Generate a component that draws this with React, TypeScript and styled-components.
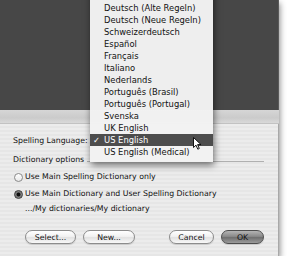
import React from "react";
import styled, { createGlobalStyle } from "styled-components";

const GlobalStyle = createGlobalStyle`
  html, body {
    margin: 0;
    padding: 0;
    background: #ffffff;
    font-family: "DejaVu Sans", "Liberation Sans", sans-serif;
  }
`;

const Window = styled.div`
  position: relative;
  width: 279px;
  height: 256px;
  display: flex;
  flex-direction: column;
  box-shadow: 1px 3px 6px rgba(0, 0, 0, 0.45);
  overflow: hidden;
`;

const Backdrop = styled.div`
  height: 110px;
  background: #474747;
  border-right: 1px solid #5a5a5a;
`;

const SheetTop = styled.div`
  height: 13px;
  background: linear-gradient(#d6d6d6, #cbcbcb 60%, #d9d9d9);
  border-bottom: 1px solid #c2c2c2;
`;

const Sheet = styled.div`
  flex: 1;
  display: flex;
  flex-direction: column;
  padding: 11px 14px 0 13px;
  background: repeating-linear-gradient(
    #ececec 0px,
    #ececec 2px,
    #e6e6e6 2px,
    #e6e6e6 4px
  );
  border-right: 1px solid #a8a8a8;
`;

const Row = styled.div<{ $mt: number; $indent?: number }>`
  display: flex;
  align-items: center;
  height: 12px;
  margin-top: ${(p) => p.$mt}px;
  margin-left: ${(p) => p.$indent ?? 0}px;
  font-size: 7.8px;
  line-height: 12px;
  color: #111;
  white-space: nowrap;
`;

const Separator = styled.div`
  flex: 1;
  height: 1px;
  margin-left: 3px;
  margin-top: 3px;
  background: #b0b0b0;
`;

const RadioDot = styled.span<{ $checked?: boolean }>`
  position: relative;
  box-sizing: border-box;
  width: 9px;
  height: 9px;
  margin-left: 1px;
  margin-right: 2px;
  border-radius: 50%;
  border: 1px solid ${(p) => (p.$checked ? "#3a3a3a" : "#8a8a8a")};
  background: ${(p) =>
    p.$checked
      ? "radial-gradient(circle at 50% 50%, #111 0 1.6px, #6a6a6a 2.2px, #9a9a9a 4px)"
      : "linear-gradient(#ffffff, #e8e8e8)"};
`;

const ButtonRow = styled.div`
  display: flex;
  justify-content: space-between;
  margin-top: 15px;
  margin-left: 12px;
`;

const ButtonGroup = styled.div`
  display: flex;
  gap: 7px;
`;

const PushButton = styled.div<{ $w: number; $default?: boolean }>`
  box-sizing: border-box;
  width: ${(p) => p.$w}px;
  height: 14px;
  border-radius: 7px;
  display: flex;
  align-items: center;
  justify-content: center;
  font-size: 7.8px;
  color: #111;
  border: 1px solid ${(p) => (p.$default ? "#4e4e4e" : "#8c8c8c")};
  background: ${(p) =>
    p.$default
      ? "linear-gradient(#b4b4b4, #8a8a8a 45%, #6f6f6f 55%, #9c9c9c)"
      : "linear-gradient(#ffffff, #f2f2f2 45%, #e2e2e2 55%, #f8f8f8)"};
  box-shadow: 0 1px 1px rgba(0, 0, 0, 0.15);
`;

const Menu = styled.div`
  position: absolute;
  left: 90px;
  top: -10px;
  width: 123px;
  box-sizing: border-box;
  padding: 12px 0 4px;
  background: rgba(242, 242, 242, 0.98);
  box-shadow: 1px 3px 7px rgba(0, 0, 0, 0.55);
`;

const MenuItem = styled.div<{ $selected?: boolean }>`
  position: relative;
  height: 12px;
  line-height: 12px;
  padding-left: 14px;
  font-size: 8.4px;
  white-space: nowrap;
  color: ${(p) => (p.$selected ? "#ffffff" : "#111")};
  background: ${(p) => (p.$selected ? "#4d4d4d" : "transparent")};
`;

const Check = styled.span`
  position: absolute;
  left: 3px;
  top: 0;
  font-size: 8.4px;
`;

const Cursor = styled.svg`
  position: absolute;
  left: 193px;
  top: 137px;
`;

const languages = [
  "Deutsch (Alte Regeln)",
  "Deutsch (Neue Regeln)",
  "Schweizerdeutsch",
  "Español",
  "Français",
  "Italiano",
  "Nederlands",
  "Português (Brasil)",
  "Português (Portugal)",
  "Svenska",
  "UK English",
  "US English",
  "US English (Medical)",
];

export default function App() {
  return (
    <>
      <GlobalStyle />
      <Window>
        <Backdrop />
        <SheetTop />
        <Sheet>
          <Row $mt={0}>Spelling Language:</Row>
          <Row $mt={7}>
            Dictionary options
            <Separator />
          </Row>
          <Row $mt={5}>
            <RadioDot />
            Use Main Spelling Dictionary only
          </Row>
          <Row $mt={5}>
            <RadioDot $checked />
            Use Main Dictionary and User Spelling Dictionary
          </Row>
          <Row $mt={3} $indent={12}>
            .../My dictionaries/My dictionary
          </Row>
          <ButtonRow>
            <ButtonGroup>
              <PushButton $w={51}>Select...</PushButton>
              <PushButton $w={52}>New...</PushButton>
            </ButtonGroup>
            <ButtonGroup>
              <PushButton $w={45}>Cancel</PushButton>
              <PushButton $w={43} $default>
                OK
              </PushButton>
            </ButtonGroup>
          </ButtonRow>
        </Sheet>
        <Menu>
          {languages.map((l) => (
            <MenuItem key={l} $selected={l === "US English"}>
              {l === "US English" && <Check>✓</Check>}
              {l}
            </MenuItem>
          ))}
        </Menu>
        <Cursor width="9" height="13" viewBox="0 0 9 13">
          <path
            d="M0.5 0.5 L0.5 10.5 L3 8.2 L4.8 12.2 L6.3 11.5 L4.6 7.6 L8 7.6 Z"
            fill="#ffffff"
            stroke="#000000"
            strokeWidth="0.9"
            strokeLinejoin="round"
          />
        </Cursor>
      </Window>
    </>
  );
}
